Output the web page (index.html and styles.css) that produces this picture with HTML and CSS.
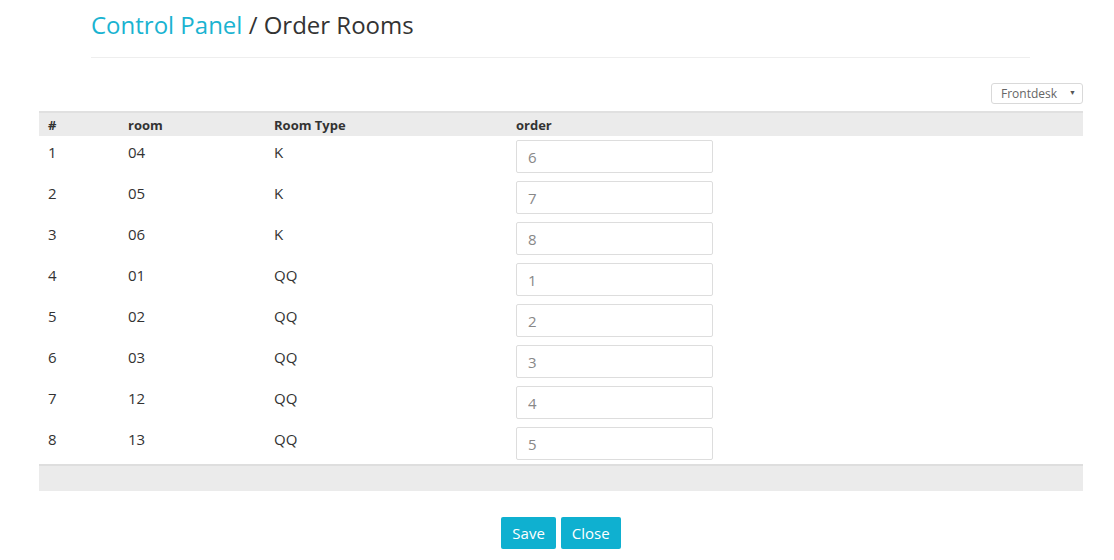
FILE: index.html
```html
<!DOCTYPE html>
<html>
<head>
<meta charset="utf-8">
<link rel="stylesheet" href="styles.css">
</head>
<body>
<div class="page">
  <div class="head">
    <h1 class="title"><span class="crumb">Control Panel</span> / Order Rooms</h1>
    <div class="rule"></div>
  </div>
  <div class="toolbar">
    <div class="select"><span>Frontdesk</span><span class="caret">&#9660;</span></div>
  </div>
  <table class="grid">
    <thead>
      <tr><th class="c1">#</th><th class="c2">room</th><th class="c3">Room Type</th><th>order</th></tr>
    </thead>
    <tbody>
      <tr><td>1</td><td>04</td><td>K</td><td><input class="ord" value="6"></td></tr>
      <tr><td>2</td><td>05</td><td>K</td><td><input class="ord" value="7"></td></tr>
      <tr><td>3</td><td>06</td><td>K</td><td><input class="ord" value="8"></td></tr>
      <tr><td>4</td><td>01</td><td>QQ</td><td><input class="ord" value="1"></td></tr>
      <tr><td>5</td><td>02</td><td>QQ</td><td><input class="ord" value="2"></td></tr>
      <tr><td>6</td><td>03</td><td>QQ</td><td><input class="ord" value="3"></td></tr>
      <tr><td>7</td><td>12</td><td>QQ</td><td><input class="ord" value="4"></td></tr>
      <tr><td>8</td><td>13</td><td>QQ</td><td><input class="ord" value="5"></td></tr>
    </tbody>
  </table>
  <div class="foot"></div>
  <div class="actions">
    <button class="btn">Save</button>
    <button class="btn">Close</button>
  </div>
</div>
</body>
</html>
```
FILE: styles.css
```css
* { box-sizing: border-box; }
html, body { margin: 0; padding: 0; background: #fff; }
body { font-family: "Open Sans", "Liberation Sans", sans-serif; color: #333; font-size: 15px; }
.page { padding: 0 31px 0 39px; }
.head { padding: 12px 53px 0 52px; }
.title { margin: 0; font-size: 24px; font-weight: 400; line-height: 26px; color: #333; }
.crumb { color: #1ab3d1; }
.rule { margin-top: 19px; height: 1px; background: #eee; }
.toolbar { display: flex; justify-content: flex-end; margin-top: 25px; }
.select { width: 92px; height: 21px; border: 1px solid #d9d9d9; border-radius: 3px; display: flex; align-items: center; justify-content: space-between; padding: 0 6px 0 9px; font-size: 12px; color: #666; }
.caret { font-size: 7px; color: #555; margin-top: -3px; }
.grid { width: 100%; border-collapse: collapse; margin-top: 7px; }
.grid thead tr { background: #ebebeb; border-top: 2px solid #e0e0e0; }
.grid th { text-align: left; font-size: 13px; font-weight: 700; color: #333; height: 24px; padding: 1px 9px 0; line-height: 16px; }
.c1 { width: 80px; }
.c2 { width: 146px; }
.c3 { width: 242px; }
.grid td { height: 41px; padding: 5px 9px 0; vertical-align: top; line-height: 22px; font-size: 15px; color: #333; }
.grid td:last-child { padding-top: 4px; }
.ord { width: 197px; height: 33px; border: 1px solid #ddd; border-radius: 2px; padding: 0 11px; font-family: "Open Sans", "Liberation Sans", sans-serif; font-size: 15px; color: #888; display: block; margin-left: 0; }
.foot { height: 27px; background: #ebebeb; border-top: 2px solid #dedede; }
.actions { display: flex; justify-content: center; gap: 5px; margin-top: 26px; }
.btn { background: #0fb0d0; color: #fff; border: 0; border-radius: 2px; height: 32px; padding: 0 11px; font-family: "Open Sans", "Liberation Sans", sans-serif; font-size: 15px; }
```
